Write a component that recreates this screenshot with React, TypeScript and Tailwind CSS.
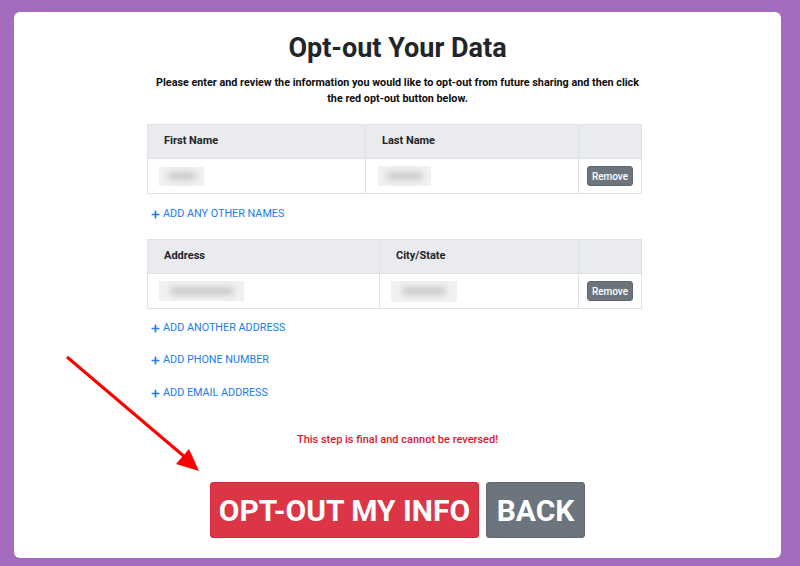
import { FaPlus } from "react-icons/fa";

function Blur({ w, h, iw, ih, ml = 0 }: { w: number; h: number; iw: number; ih: number; ml?: number }) {
  return (
    <div
      className="bg-[#f1f1f1] flex items-center justify-center overflow-hidden"
      style={{ width: w, height: h, marginLeft: ml }}
    >
      <div className="bg-[#c9c9c9] rounded-full blur-[3px]" style={{ width: iw, height: ih }} />
    </div>
  );
}

function RemoveBtn() {
  return (
    <div className="flex items-center justify-center">
      <div className="w-[46px] h-[20px] bg-[#6c757d] rounded-[3px] text-white text-[10px] font-medium flex items-center justify-center border border-[#5f676e]">
        Remove
      </div>
    </div>
  );
}

function Table({
  cols,
  h1,
  h2,
  b1,
  b2,
}: {
  cols: string;
  h1: string;
  h2: string;
  b1: React.ReactNode;
  b2: React.ReactNode;
}) {
  return (
    <div className={`border border-[#dee2e6] grid ${cols} text-[#212529]`}>
      <div className="h-[33px] bg-[#e9ebee] border-r border-[#dee2e6] flex items-center pl-[16px] text-[11px] font-bold">
        {h1}
      </div>
      <div className="h-[33px] bg-[#e9ebee] border-r border-[#dee2e6] flex items-center pl-[16px] text-[11px] font-bold">
        {h2}
      </div>
      <div className="h-[33px] bg-[#e9ebee]" />
      <div className="h-[35px] border-t border-r border-[#dee2e6] flex items-center">{b1}</div>
      <div className="h-[35px] border-t border-r border-[#dee2e6] flex items-center">{b2}</div>
      <div className="h-[35px] border-t border-[#dee2e6] flex items-center justify-center">
        <RemoveBtn />
      </div>
    </div>
  );
}

function AddLink({ label, mt }: { label: string; mt: string }) {
  return (
    <div className={`${mt} pl-[4px] h-[16px] flex items-center gap-[3px] text-[#1a7cf0] text-[10.8px]`}>
      <FaPlus size={9} />
      <span>{label}</span>
    </div>
  );
}

export default function App() {
  return (
    <div className="relative w-[800px] h-[566px] bg-[#a46cbf] pt-[12px] pl-[14px] pr-[19px] pb-[8px] font-[Roboto,sans-serif] overflow-hidden">
      <div className="h-full bg-white rounded-[6px] flex flex-col items-center pt-[20px]">
        <h1 className="text-[27px] leading-[32px] font-bold text-[#212529]">Opt-out Your Data</h1>
        <p className="mt-[11px] text-[10.8px] leading-[16px] font-bold text-center text-[#0d0d0d]">
          Please enter and review the information you would like to opt-out from future sharing and then click
          <br />
          the red opt-out button below.
        </p>
        <div className="w-[495px] mt-[17px] ml-[-6px]">
          <Table
            cols="grid-cols-[218px_213px_1fr]"
            h1="First Name"
            h2="Last Name"
            b1={<Blur w={45} h={19} iw={28} ih={8} ml={11} />}
            b2={<Blur w={53} h={20} iw={36} ih={8} ml={12} />}
          />
          <AddLink label="ADD ANY OTHER NAMES" mt="mt-[12px]" />
          <div className="mt-[17px]">
            <Table
              cols="grid-cols-[232px_199px_1fr]"
              h1="Address"
              h2="City/State"
              b1={<Blur w={85} h={20} iw={64} ih={8} ml={11} />}
              b2={<Blur w={66} h={21} iw={44} ih={8} ml={11} />}
            />
          </div>
          <AddLink label="ADD ANOTHER ADDRESS" mt="mt-[11px]" />
          <AddLink label="ADD PHONE NUMBER" mt="mt-[16px]" />
          <AddLink label="ADD EMAIL ADDRESS" mt="mt-[17px]" />
        </div>
        <div className="mt-[31px] h-[16px] leading-[16px] text-[11px] font-medium text-[#e0162b]">
          This step is final and cannot be reversed!
        </div>
        <div className="mt-[34px] flex gap-[7px]">
          <div className="w-[269px] h-[56px] bg-[#dc3545] border border-[#d42a3c] rounded-[3px] flex items-center justify-center text-white text-[30px] font-bold">
            OPT-OUT MY INFO
          </div>
          <div className="w-[99px] h-[56px] bg-[#6c757d] border border-[#62696f] rounded-[3px] flex items-center justify-center text-white text-[30px] font-bold">
            BACK
          </div>
        </div>
      </div>
      <svg className="absolute left-0 top-0 pointer-events-none" width="800" height="566" viewBox="0 0 800 566">
        <line x1="67" y1="357" x2="186" y2="458" stroke="#ff0000" strokeWidth="3" />
        <polygon points="199,471 176,464 189,449" fill="#ff0000" />
      </svg>
    </div>
  );
}
